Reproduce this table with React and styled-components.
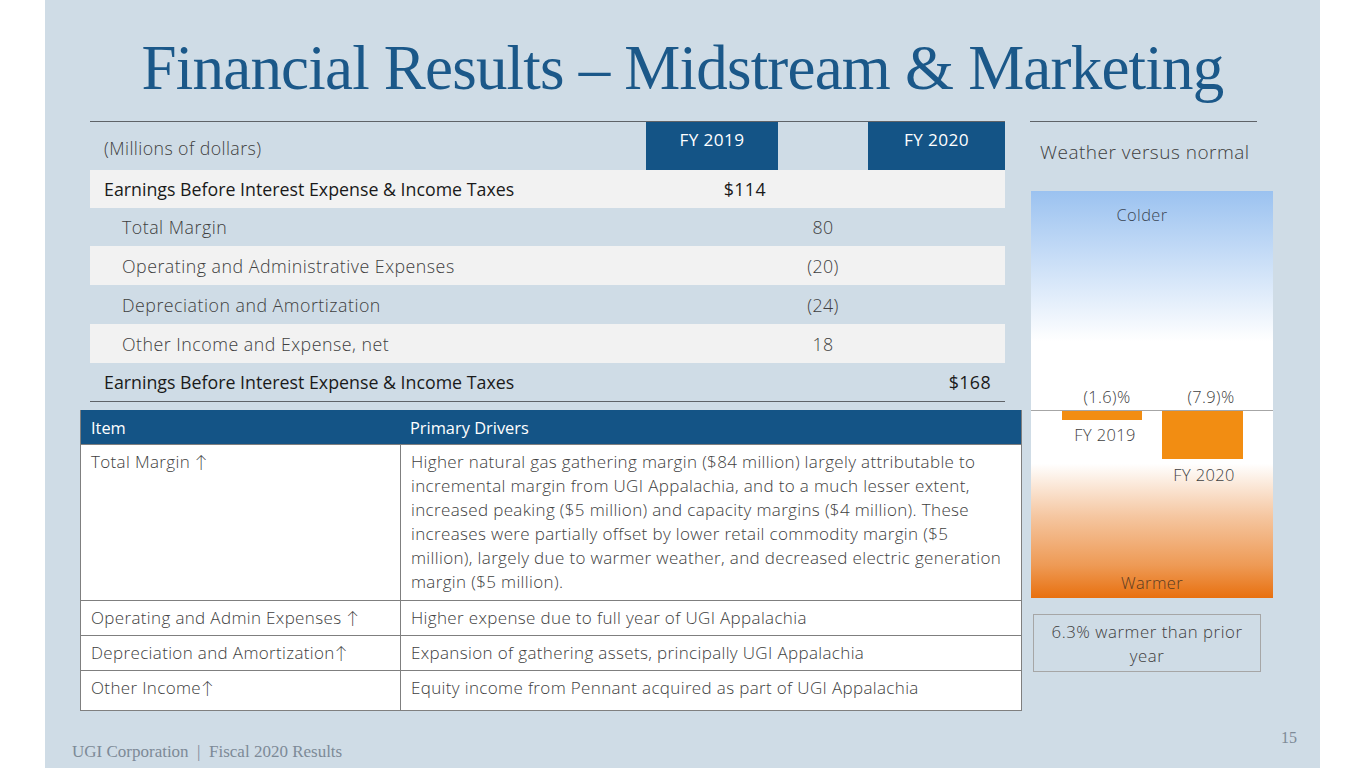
import React from 'react';
import styled, { createGlobalStyle } from 'styled-components';

const GlobalStyle = createGlobalStyle`
	body {
		margin: 0;
		background: #ffffff;
		font-family: 'Open Sans', 'Lato', sans-serif;
	}
`;

const Slide = styled.div`
	width: 1275px;
	height: 768px;
	margin: 0 45px;
	background: #cfdce6;
	display: flex;
	flex-direction: column;
	overflow: hidden;
`;
const Title = styled.h1`
	margin: 0;
	padding-top: 32px;
	height: 72px;
	line-height: 72px;
	text-align: center;
	font-family: 'Liberation Serif', serif;
	font-weight: 400;
	font-size: 63px;
	letter-spacing: -0.8px;
	color: #1b5889;
`;
const Content = styled.div`
	display: flex;
	margin-top: 17px;
	padding-left: 35px;
`;
const LeftCol = styled.div`
	width: 940px;
	display: flex;
	flex-direction: column;
`;
const RightCol = styled.div`
	width: 243px;
	margin-left: 10px;
	display: flex;
	flex-direction: column;
`;

const FinTable = styled.div`
	margin-left: 10px;
	width: 915px;
	border-top: 1px solid #5f6368;
	border-bottom: 1px solid #5f6368;
`;
const FinRow = styled.div`
	display: grid;
	grid-template-columns: 556px 132px 90px 137px;
	height: ${(props) => props.h}px;
	background: ${(props) => (props.shade ? '#f2f2f2' : 'transparent')};
	align-items: center;
`;
const Label = styled.div`
	padding-left: ${(props) => (props.indent ? 32 : 14)}px;
	font-size: 17.8px;
	font-weight: ${(props) => (props.strong ? 400 : 300)};
	letter-spacing: ${(props) => (props.strong ? '0' : '0.5px')};
	color: ${(props) => (props.strong ? '#1a1a1a' : '#404040')};
`;
const HeadLabel = styled.div`
	align-self: end;
	padding: 0 0 10px 14px;
	font-size: 17.8px;
	font-weight: 300;
	letter-spacing: 0.4px;
	color: #404040;
`;
const YearHead = styled.div`
	align-self: stretch;
	background: #145486;
	color: #ffffff;
	text-align: center;
	padding-top: 8px;
	line-height: 20px;
	font-size: 17.2px;
	letter-spacing: 0.4px;
`;
const Value = styled.div`
	text-align: ${(props) => props.align || 'center'};
	padding-right: ${(props) => props.pr || 0}px;
	font-size: 17.8px;
	font-weight: ${(props) => (props.strong ? 400 : 300)};
	letter-spacing: 0.4px;
	color: ${(props) => (props.strong ? '#1a1a1a' : '#404040')};
`;

const Drivers = styled.div`
	margin-top: 8px;
	width: 940px;
	background: #ffffff;
	border: 1px solid #7f7f7f;
	border-top: none;
`;
const DriverHead = styled.div`
	display: grid;
	grid-template-columns: 319px 1fr;
	height: 34px;
	background: #145486;
	align-items: center;
	color: #ffffff;
	font-size: 16.4px;
`;
const DriverRow = styled.div`
	display: grid;
	grid-template-columns: 319px 1fr;
	min-height: ${(props) => props.h || 34}px;
	border-top: 1px solid #7f7f7f;
	font-size: 17px;
	font-weight: 300;
	letter-spacing: 0.35px;
	color: #404040;
	line-height: 24px;
`;
const Cell = styled.div`
	padding: 5px 11px 5px 10px;
	border-left: ${(props) => (props.divider ? '1px solid #7f7f7f' : 'none')};
	white-space: nowrap;
`;

const Rule = styled.div`
	width: 227px;
	border-top: 1px solid #5f6368;
`;
const WeatherTitle = styled.div`
	margin-top: 17px;
	padding-left: 10px;
	line-height: 26px;
	font-size: 19px;
	font-weight: 300;
	letter-spacing: 0.5px;
	color: #404040;
`;
const ChartBox = styled.div`
	margin: 26px 0 0 1px;
	width: 242px;
	height: 407px;
`;
const Note = styled.div`
	margin: 16px 0 0 3px;
	width: 228px;
	height: 58px;
	border: 1px solid #a6a6a6;
	text-align: center;
	font-size: 16.8px;
	font-weight: 300;
	letter-spacing: 0.55px;
	line-height: 24px;
	padding-top: 5px;
	box-sizing: border-box;
	color: #404040;
`;

const Footer = styled.div`
	margin-top: auto;
	height: 40px;
	display: flex;
	justify-content: space-between;
	padding: 0 23px 0 27px;
	font-family: 'Liberation Serif', serif;
	color: #7d8a97;
`;
const FooterText = styled.div`
	align-self: flex-end;
	padding-bottom: 7px;
	font-size: 17px;
	letter-spacing: 0;
	line-height: 18px;
	white-space: pre;
`;
const PageNum = styled.div`
	align-self: flex-start;
	font-size: 16px;
	line-height: 20px;
`;

const rows = [
	{ label: 'Earnings Before Interest Expense & Income Taxes', strong: true, shade: true, h: 38, fy19: '$114' },
	{ label: 'Total Margin', h: 38, diff: '80' },
	{ label: 'Operating and Administrative Expenses', shade: true, h: 39, diff: '(20)' },
	{ label: 'Depreciation and Amortization', h: 39, diff: '(24)' },
	{ label: 'Other Income and Expense, net', shade: true, h: 39, diff: '18' },
	{ label: 'Earnings Before Interest Expense & Income Taxes', strong: true, h: 38, fy20: '$168' },
];

function WeatherChart() {
	const txt = {
		fontFamily: "'Open Sans', sans-serif",
		fontSize: 16.4,
		fontWeight: 300,
		letterSpacing: 0.4,
		fill: '#404040',
		textAnchor: 'middle',
	};
	return (
		<svg width="242" height="407" viewBox="0 0 242 407">
			<defs>
				<linearGradient id="wx" x1="0" y1="0" x2="0" y2="1">
					<stop offset="0" stopColor="#9bc2f0" />
					<stop offset="0.37" stopColor="#ffffff" />
					<stop offset="0.67" stopColor="#ffffff" />
					<stop offset="0.8" stopColor="#f5c6a0" />
					<stop offset="0.92" stopColor="#ee9a55" />
					<stop offset="1" stopColor="#e8700f" />
				</linearGradient>
			</defs>
			<rect x="0" y="0" width="242" height="407" fill="url(#wx)" />
			<line x1="0" y1="219.5" x2="242" y2="219.5" stroke="#a6a6a6" strokeWidth="1" />
			<rect x="31" y="220" width="80" height="9" fill="#f28d12" />
			<rect x="131" y="220" width="81" height="48" fill="#f28d12" />
			<text x="111" y="30" {...txt} fill="#3a4756">Colder</text>
			<text x="76" y="212" {...txt}>(1.6)%</text>
			<text x="180" y="212" {...txt}>(7.9)%</text>
			<text x="74" y="250" {...txt}>FY 2019</text>
			<text x="173" y="290" {...txt}>FY 2020</text>
			<text x="121" y="398" {...txt} fill="#5a3b22">Warmer</text>
		</svg>
	);
}

export default function App() {
	return (
		<>
			<GlobalStyle />
			<Slide>
				<Title>Financial Results – Midstream &amp; Marketing</Title>
				<Content>
					<LeftCol>
						<FinTable>
							<FinRow h={48}>
								<HeadLabel>(Millions of dollars)</HeadLabel>
								<YearHead>FY 2019</YearHead>
								<div />
								<YearHead>FY 2020</YearHead>
							</FinRow>
							{rows.map((r, i) => (
								<FinRow key={i} h={r.h} shade={r.shade}>
									<Label strong={r.strong} indent={!r.strong}>{r.label}</Label>
									<Value align="right" pr={12} strong={r.strong}>{r.fy19}</Value>
									<Value>{r.diff}</Value>
									<Value align="right" pr={14} strong={r.strong}>{r.fy20}</Value>
								</FinRow>
							))}
						</FinTable>
						<Drivers>
							<DriverHead>
								<Cell>Item</Cell>
								<Cell>Primary Drivers</Cell>
							</DriverHead>
							<DriverRow h={155}>
								<Cell>Total Margin ↑</Cell>
								<Cell divider>
									Higher natural gas gathering margin ($84 million) largely attributable to<br />
									incremental margin from UGI Appalachia, and to a much lesser extent,<br />
									increased peaking ($5 million) and capacity margins ($4 million). These<br />
									increases were partially offset by lower retail commodity margin ($5<br />
									million), largely due to warmer weather, and decreased electric generation<br />
									margin ($5 million).
								</Cell>
							</DriverRow>
							<DriverRow>
								<Cell>Operating and Admin Expenses ↑</Cell>
								<Cell divider>Higher expense due to full year of UGI Appalachia</Cell>
							</DriverRow>
							<DriverRow>
								<Cell>Depreciation and Amortization↑</Cell>
								<Cell divider>Expansion of gathering assets, principally UGI Appalachia</Cell>
							</DriverRow>
							<DriverRow h={39}>
								<Cell>Other Income↑</Cell>
								<Cell divider>Equity income from Pennant acquired as part of UGI Appalachia</Cell>
							</DriverRow>
						</Drivers>
					</LeftCol>
					<RightCol>
						<Rule />
						<WeatherTitle>Weather versus normal</WeatherTitle>
						<ChartBox>
							<WeatherChart />
						</ChartBox>
						<Note>
							6.3% warmer than prior
							<br />
							year
						</Note>
					</RightCol>
				</Content>
				<Footer>
					<FooterText>{'UGI Corporation  |  Fiscal 2020 Results'}</FooterText>
					<PageNum>15</PageNum>
				</Footer>
			</Slide>
		</>
	);
}
